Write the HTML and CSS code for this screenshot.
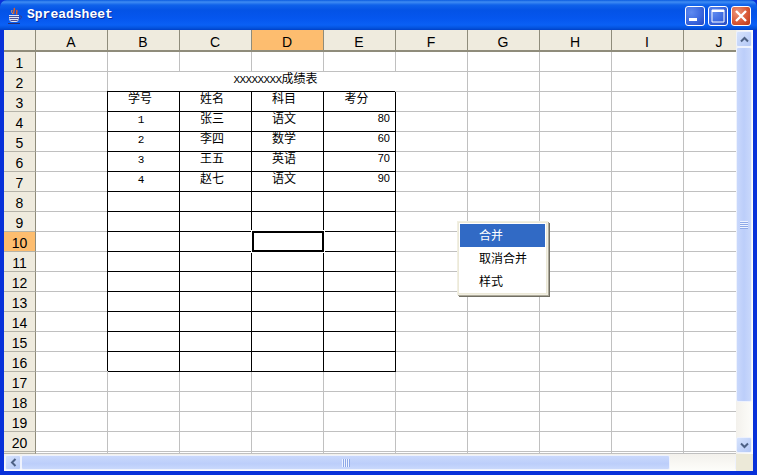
FILE: index.html
```html
<!DOCTYPE html>
<html lang="zh">
<head>
<meta charset="utf-8">
<title>Spreadsheet</title>
<link rel="stylesheet" href="styles.css">
</head>
<body>
<div class="window">
  <header class="titlebar">
    <svg class="app-icon" width="16" height="18" viewBox="0 0 16 18">
      <path d="M7 1c2 2-2 3 0 6M9.500 3c1.500 2-1 2.500 .5 4.500" fill="none" stroke="#e8601c" stroke-width="1.500"/>
      <path d="M5 3c-1 2 0 3 1 4" fill="none" stroke="#f0a060" stroke-width="1"/>
      <path d="M2 8h10v3c0 2.500-1.500 4-3 4H5c-1.500 0-3-1.500-3-4z" fill="#dfe6f5"/>
      <path d="M2 9.500h10M2.500 11.500h9M3.500 13.500h7" stroke="#4a4f9a" stroke-width="1"/>
      <path d="M12 9h2c1 0 1 3-2.500 3.500" fill="none" stroke="#3b3f86" stroke-width="1"/>
      <path d="M1 16.500h12" stroke="#2c2f70" stroke-width="1.200"/>
    </svg>
    <span class="title">Spreadsheet</span>
    <div class="controls">
      <span class="wbtn"><svg width="20" height="20" viewBox="0 0 20 20"><rect x="4" y="12" width="8" height="3" fill="#fff"/></svg></span>
      <span class="wbtn"><svg width="20" height="20" viewBox="0 0 20 20"><path d="M4 4h12v12H4z" fill="none" stroke="#fff"/><rect x="4" y="4" width="12" height="2" fill="#fff"/></svg></span>
      <span class="wbtn close"><svg width="20" height="20" viewBox="0 0 20 20"><path d="M5 5l10 10M15 5L5 15" stroke="#fff" stroke-width="2.400"/></svg></span>
    </div>
  </header>
  <div class="client">
    <div class="sheet">
      <div class="grid">
        <div class="hd corner"></div><div class="hd">A</div><div class="hd">B</div><div class="hd">C</div><div class="hd on">D</div><div class="hd">E</div><div class="hd">F</div><div class="hd">G</div><div class="hd">H</div><div class="hd">I</div><div class="hd">J</div>

        <div class="rh">1</div><div class="c"></div><div class="c"></div><div class="c"></div><div class="c"></div><div class="c"></div><div class="c"></div><div class="c"></div><div class="c"></div><div class="c"></div><div class="c"></div>

        <div class="rh">2</div><div class="c"></div><div class="c merged"><span class="x">XXXXXXXX</span>成绩表</div><div class="c"></div><div class="c"></div><div class="c"></div><div class="c"></div>

        <div class="rh">3</div><div class="c"></div><div class="c t m">学号</div><div class="c t m">姓名</div><div class="c t m">科目</div><div class="c t m up">考分</div><div class="c"></div><div class="c"></div><div class="c"></div><div class="c"></div><div class="c"></div>

        <div class="rh">4</div><div class="c"></div><div class="c t m num">1</div><div class="c t m">张三</div><div class="c t m">语文</div><div class="c t r">80</div><div class="c"></div><div class="c"></div><div class="c"></div><div class="c"></div><div class="c"></div>

        <div class="rh">5</div><div class="c"></div><div class="c t m num">2</div><div class="c t m">李四</div><div class="c t m">数学</div><div class="c t r">60</div><div class="c"></div><div class="c"></div><div class="c"></div><div class="c"></div><div class="c"></div>

        <div class="rh">6</div><div class="c"></div><div class="c t m num">3</div><div class="c t m">王五</div><div class="c t m">英语</div><div class="c t r">70</div><div class="c"></div><div class="c"></div><div class="c"></div><div class="c"></div><div class="c"></div>

        <div class="rh">7</div><div class="c"></div><div class="c t m num">4</div><div class="c t m">赵七</div><div class="c t m">语文</div><div class="c t r">90</div><div class="c"></div><div class="c"></div><div class="c"></div><div class="c"></div><div class="c"></div>

        <div class="rh">8</div><div class="c"></div><div class="c t"></div><div class="c t"></div><div class="c t"></div><div class="c t"></div><div class="c"></div><div class="c"></div><div class="c"></div><div class="c"></div><div class="c"></div>

        <div class="rh">9</div><div class="c"></div><div class="c t"></div><div class="c t"></div><div class="c t"></div><div class="c t"></div><div class="c"></div><div class="c"></div><div class="c"></div><div class="c"></div><div class="c"></div>

        <div class="rh on">10</div><div class="c"></div><div class="c t"></div><div class="c t"></div><div class="c t sel"></div><div class="c t"></div><div class="c"></div><div class="c"></div><div class="c"></div><div class="c"></div><div class="c"></div>

        <div class="rh">11</div><div class="c"></div><div class="c t"></div><div class="c t"></div><div class="c t"></div><div class="c t"></div><div class="c"></div><div class="c"></div><div class="c"></div><div class="c"></div><div class="c"></div>

        <div class="rh">12</div><div class="c"></div><div class="c t"></div><div class="c t"></div><div class="c t"></div><div class="c t"></div><div class="c"></div><div class="c"></div><div class="c"></div><div class="c"></div><div class="c"></div>

        <div class="rh">13</div><div class="c"></div><div class="c t"></div><div class="c t"></div><div class="c t"></div><div class="c t"></div><div class="c"></div><div class="c"></div><div class="c"></div><div class="c"></div><div class="c"></div>

        <div class="rh">14</div><div class="c"></div><div class="c t"></div><div class="c t"></div><div class="c t"></div><div class="c t"></div><div class="c"></div><div class="c"></div><div class="c"></div><div class="c"></div><div class="c"></div>

        <div class="rh">15</div><div class="c"></div><div class="c t"></div><div class="c t"></div><div class="c t"></div><div class="c t"></div><div class="c"></div><div class="c"></div><div class="c"></div><div class="c"></div><div class="c"></div>

        <div class="rh">16</div><div class="c"></div><div class="c t"></div><div class="c t"></div><div class="c t"></div><div class="c t"></div><div class="c"></div><div class="c"></div><div class="c"></div><div class="c"></div><div class="c"></div>

        <div class="rh">17</div><div class="c"></div><div class="c"></div><div class="c"></div><div class="c"></div><div class="c"></div><div class="c"></div><div class="c"></div><div class="c"></div><div class="c"></div><div class="c"></div>

        <div class="rh">18</div><div class="c"></div><div class="c"></div><div class="c"></div><div class="c"></div><div class="c"></div><div class="c"></div><div class="c"></div><div class="c"></div><div class="c"></div><div class="c"></div>

        <div class="rh">19</div><div class="c"></div><div class="c"></div><div class="c"></div><div class="c"></div><div class="c"></div><div class="c"></div><div class="c"></div><div class="c"></div><div class="c"></div><div class="c"></div>

        <div class="rh">20</div><div class="c"></div><div class="c"></div><div class="c"></div><div class="c"></div><div class="c"></div><div class="c"></div><div class="c"></div><div class="c"></div><div class="c"></div><div class="c"></div>

        <div class="rh"></div><div class="c"></div><div class="c"></div><div class="c"></div><div class="c"></div><div class="c"></div><div class="c"></div><div class="c"></div><div class="c"></div><div class="c"></div><div class="c"></div>
      </div>
    </div>
    <div class="vbar">
      <span class="sbtn"><svg width="9" height="7" viewBox="0 0 9 7"><path d="M1 5.500l3.500-3.500L8 5.500" fill="none" stroke="#4d6185" stroke-width="2"/></svg></span>
      <span class="vthumb"><span class="grip"></span></span>
      <span class="sbtn"><svg width="9" height="7" viewBox="0 0 9 7"><path d="M1 1.500L4.500 5 8 1.500" fill="none" stroke="#4d6185" stroke-width="2"/></svg></span>
    </div>
    <div class="hbar">
      <span class="sbtn"><svg width="7" height="9" viewBox="0 0 7 9"><path d="M5.500 1L2 4.500 5.500 8" fill="none" stroke="#4d6185" stroke-width="2"/></svg></span>
      <span class="hthumb"><span class="hgrip"></span></span>
      <span class="sbtn"><svg width="7" height="9" viewBox="0 0 7 9"><path d="M1.500 1L5 4.500 1.500 8" fill="none" stroke="#4d6185" stroke-width="2"/></svg></span>
    </div>
    <div class="sizer"></div>
    <ul class="menu">
      <li class="active">合并</li>
      <li>取消合并</li>
      <li>样式</li>
    </ul>
  </div>
</div>
</body>
</html>
```
FILE: styles.css
```css
* { box-sizing: border-box; }
html, body { margin: 0; padding: 0; background: #0831d9; }
body { width: 757px; height: 475px; overflow: hidden; }

.window {
  width: 757px;
  height: 475px;
  display: flex;
  flex-direction: column;
  background: #0831d9;
  border-radius: 7px 7px 0 0;
  overflow: hidden;
}

.titlebar {
  flex: 0 0 30px;
  display: flex;
  align-items: center;
  padding: 0 6px 0 7px;
  background: linear-gradient(180deg, #0a5be0 0, #3f8cf3 2px, #0f62ea 5px, #0453e6 10px, #0556ee 18px, #0a60f5 25px, #0453dd 28px, #0040c8 30px);
}
.app-icon { margin-top: 2px; flex: none; }
.title {
  margin-left: 4px;
  color: #fff;
  font: bold 13px/16px "Liberation Mono", monospace;
  text-shadow: 1px 1px 0 #0a2a9c;
  flex: 1;
}
.controls { display: flex; gap: 3px; margin-top: 2px; }
.wbtn {
  width: 20px;
  height: 20px;
  display: block;
  border: 1px solid #fff;
  border-radius: 3px;
  background: radial-gradient(circle at 30% 30%, #5f8af0 0, #3c68df 55%, #2347bf 100%);
  position: relative;
  overflow: hidden;
}
.wbtn svg { position: absolute; left: -1px; top: -1px; display: block; }
.close { background: radial-gradient(circle at 30% 30%, #ec9478 0, #da5a38 55%, #b93515 100%); }

.client {
  flex: 1;
  position: relative;
  margin: 0 4px 4px;
  display: grid;
  grid-template-columns: 732px 17px;
  grid-template-rows: 424px 17px;
  background: #ece9d8;
}

.sheet { overflow: hidden; background: #fff; }
.grid {
  display: grid;
  grid-template-columns: 32px repeat(10, 72px);
  grid-template-rows: 22px repeat(20, 20px) 2px;
  width: 752px;
  font: 12px/12px "Noto Sans CJK SC", "Liberation Sans", sans-serif;
  color: #000;
  background: #fff;
}

.hd, .rh {
  background: #efebde;
  border-right: 1px solid #8f8c7b;
  border-bottom: 1px solid #8f8c7b;
  display: flex;
  justify-content: center;
  font: 14px/16px "Liberation Sans", sans-serif;
  overflow: hidden;
}
.hd { align-items: center; padding: 4px 1px 0 0; border-bottom-width: 2px; }
.rh { align-items: flex-end; border-bottom-color: #b5b3a8; }
.hd.on, .rh.on { background: #fdbd6f; }

.c {
  border-right: 1px solid #c0c0c0;
  border-bottom: 1px solid #c0c0c0;
}
.t {
  border-color: #000;
  box-shadow: -1px -1px 0 #000;
}
.m {
  text-align: center;
  padding-right: 7px;
}
.up { padding-right: 6px; }
.num { font: 11px/16px "Liberation Mono", monospace; padding-right: 5px; }
.r {
  text-align: right;
  padding-right: 5px;
  font: 11px/13px "Liberation Sans", sans-serif;
}
.merged {
  grid-column: span 5;
  text-align: center;
  padding-right: 24px;
}
.x { font: 11px/12px "Liberation Mono", monospace; letter-spacing: -0.6px; }
.sel { position: relative; }
.sel::after {
  content: "";
  position: absolute;
  left: 0;
  right: -1px;
  top: -1px;
  bottom: -1px;
  border: 2px solid #000;
  outline: 1px solid #fff;
}

.vbar, .hbar {
  background: linear-gradient(90deg, #f3f1ec, #fdfdfa);
  display: flex;
}
.vbar { flex-direction: column; padding: 1px 1px 0 0; }
.hbar { padding: 1px 0 1px 1px; background: linear-gradient(180deg, #f3f1ec, #fdfdfa); }
.sbtn {
  flex: none;
  width: 16px;
  height: 16px;
  display: flex;
  align-items: center;
  justify-content: center;
  border: 1px solid #eef2fd;
  border-radius: 2px;
  background: linear-gradient(135deg, #d6e3fd, #b4c8f6);
}
.vthumb {
  flex: none;
  width: 16px;
  height: 355px;
  margin: 0 0 35px;
  display: flex;
  align-items: center;
  justify-content: center;
  border: 1px solid #eef2fd;
  border-radius: 2px;
  background: linear-gradient(90deg, #c9d8fc, #bccefa 50%, #c9d8fc);
}
.grip {
  width: 8px;
  height: 8px;
  background: repeating-linear-gradient(180deg, #eef3ff 0 1px, #8ea9e8 1px 2px);
}
.hthumb {
  flex: none;
  width: 649px;
  height: 15px;
  margin: 0 65px 0 0;
  display: flex;
  align-items: center;
  justify-content: center;
  border: 1px solid #eef2fd;
  border-radius: 2px;
  background: linear-gradient(180deg, #c9d8fc, #bccefa 60%, #c9d8fc);
}
.hgrip {
  width: 8px;
  height: 8px;
  background: repeating-linear-gradient(90deg, #eef3ff 0 1px, #8ea9e8 1px 2px);
}
.hbar .sbtn { height: 15px; }
.sizer { background: #ece9d8; }

.menu {
  position: absolute;
  left: 453px;
  top: 191px;
  width: 91px;
  height: 74px;
  margin: 0;
  padding: 2px;
  list-style: none;
  background: #fff;
  border: 1px solid #f1efe2;
  box-shadow: inset 0 0 0 1px #ece9d8, 1px 1px 0 #aca899, 2px 2px 0 #716f64;
  font: 12px/21px "Noto Sans CJK SC", sans-serif;
  color: #000;
}
.menu li { height: 23px; padding-left: 19px; }
.menu .active { background: #316ac5; color: #fff; }
```
